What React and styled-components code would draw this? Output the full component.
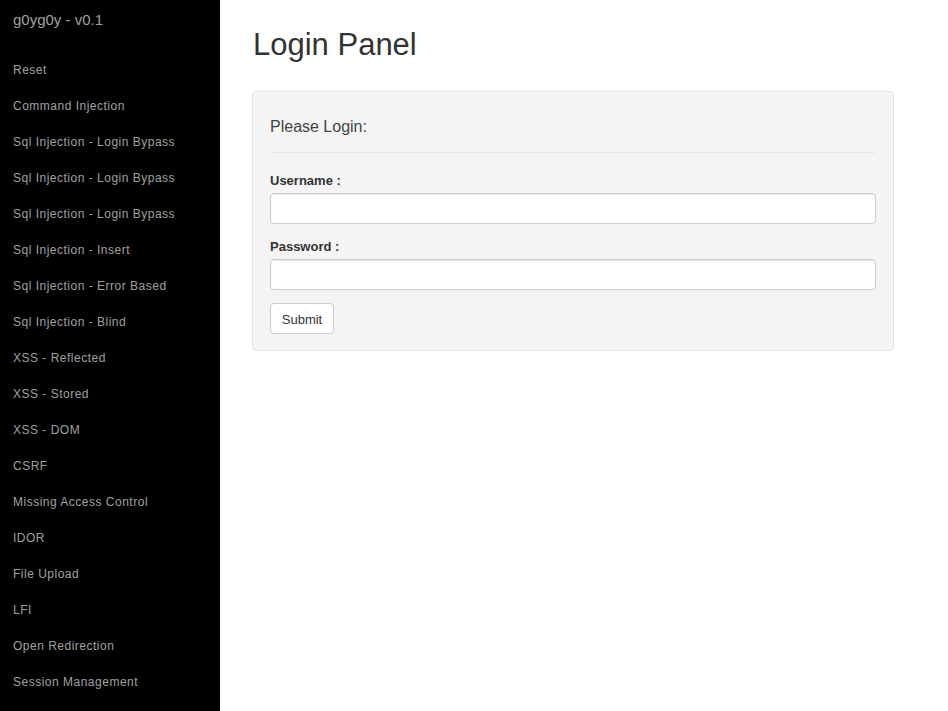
import styled, { createGlobalStyle } from "styled-components";

const links = [
  "Reset",
  "Command Injection",
  "Sql Injection - Login Bypass",
  "Sql Injection - Login Bypass",
  "Sql Injection - Login Bypass",
  "Sql Injection - Insert",
  "Sql Injection - Error Based",
  "Sql Injection - Blind",
  "XSS - Reflected",
  "XSS - Stored",
  "XSS - DOM",
  "CSRF",
  "Missing Access Control",
  "IDOR",
  "File Upload",
  "LFI",
  "Open Redirection",
  "Session Management",
];

export default function App() {
  return (
    <>
      <GlobalStyle />
      <StyledPage>
        <StyledSidebar>
          <StyledBrand>g0yg0y - v0.1</StyledBrand>
          <StyledNav>
            {links.map((link, i) => (
              <li key={i}>
                <StyledNavLink href="#">{link}</StyledNavLink>
              </li>
            ))}
          </StyledNav>
        </StyledSidebar>
        <StyledMain>
          <StyledTitle>Login Panel</StyledTitle>
          <StyledPanel>
            <StyledPanelHeader>Please Login:</StyledPanelHeader>
            <StyledGroup>
              <StyledLabel>Username :</StyledLabel>
              <StyledInput type="text" />
            </StyledGroup>
            <StyledGroup>
              <StyledLabel>Password :</StyledLabel>
              <StyledInput type="password" />
            </StyledGroup>
            <StyledButton type="button">Submit</StyledButton>
          </StyledPanel>
        </StyledMain>
      </StyledPage>
    </>
  );
}

const GlobalStyle = createGlobalStyle`
  html, body {
    margin: 0;
    padding: 0;
    background: #fff;
    font-family: "Liberation Sans", Arial, sans-serif;
    color: #333;
  }
`;

const StyledPage = styled.div`
  display: flex;
  min-height: 100vh;
`;

const StyledSidebar = styled.nav`
  width: 220px;
  flex-shrink: 0;
  background: #000;
`;

const StyledBrand = styled.div`
  padding: 10px 13px 22px;
  font-size: 15px;
  line-height: 20px;
  color: #a0a0a0;
`;

const StyledNav = styled.ul`
  list-style: none;
  margin: 0;
  padding: 0;
`;

const StyledNavLink = styled.a`
  display: block;
  padding: 0 13px;
  height: 36px;
  line-height: 36px;
  font-size: 12px;
  letter-spacing: 0.5px;
  color: #a0a0a0;
  text-decoration: none;
  white-space: nowrap;
`;

const StyledMain = styled.main`
  flex: 1;
  padding: 28px 54px 0 32px;
`;

const StyledTitle = styled.h1`
  margin: 0 0 29px 1px;
  font-size: 31px;
  line-height: 34px;
  font-weight: 500;
  color: #333;
`;

const StyledPanel = styled.div`
  width: 606px;
  padding: 17px 17px 16px;
  background: #f4f4f4;
  border: 1px solid #e3e3e3;
  border-radius: 4px;
`;

const StyledPanelHeader = styled.div`
  margin: 8px 0 18px;
  padding-bottom: 15px;
  border-bottom: 1px solid #e8e8e8;
  font-size: 16px;
  line-height: 20px;
  color: #444;
`;

const StyledGroup = styled.div`
  display: flex;
  flex-direction: column;
  margin-bottom: 13px;
`;

const StyledLabel = styled.label`
  margin-bottom: 2px;
  font-size: 13px;
  line-height: 20px;
  font-weight: bold;
  color: #333;
`;

const StyledInput = styled.input`
  box-sizing: border-box;
  height: 31px;
  padding: 5px 10px;
  background: #fff;
  border: 1px solid #ccc;
  border-radius: 4px;
  box-shadow: inset 0 1px 1px rgba(0, 0, 0, 0.075);
  font-size: 13px;
`;

const StyledButton = styled.button`
  box-sizing: border-box;
  width: 64px;
  height: 31px;
  padding: 1px 0 0;
  background: #fff;
  border: 1px solid #ccc;
  border-radius: 4px;
  font-family: "Liberation Sans", Arial, sans-serif;
  font-size: 13px;
  color: #333;
`;
